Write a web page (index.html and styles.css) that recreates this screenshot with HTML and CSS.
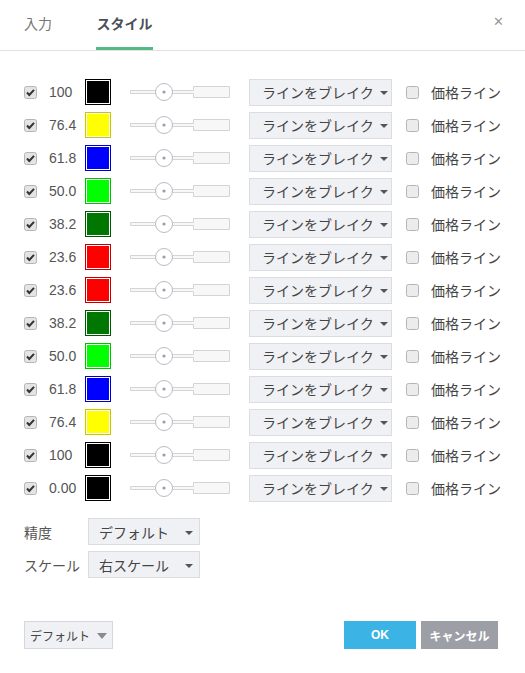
FILE: index.html
```html
<!DOCTYPE html>
<html>
  <head>
    <title>スタイル</title>
    <meta charset="UTF-8">
    <link rel="stylesheet" href="styles.css">
  </head>
  <body>
    <div class="dialog">
      <div class="header">
        <div class="tab">入力</div>
        <div class="tab active">スタイル</div>
        <div class="close">&#x2715;</div>
      </div>

      <div class="levels" id="levels"></div>

      <div class="options">
        <div class="option">
          <span class="option-label">精度</span>
          <div class="select small">デフォルト<span class="caret"></span></div>
        </div>
        <div class="option">
          <span class="option-label">スケール</span>
          <div class="select small">右スケール<span class="caret"></span></div>
        </div>
      </div>

      <div class="footer">
        <div class="btn btn-default">デフォルト<span class="caret big"></span></div>
        <div class="spacer"></div>
        <div class="btn btn-ok">OK</div>
        <div class="btn btn-cancel">キャンセル</div>
      </div>
    </div>

    <script>
      // fib levels: value, fill colour, border colour
      var levels = [
        ['100', '#000000', '#000000'],
        ['76.4', '#ffff00', '#c8c800'],
        ['61.8', '#0000ff', '#0000c0'],
        ['50.0', '#00ff00', '#00c000'],
        ['38.2', '#007700', '#005500'],
        ['23.6', '#ff0000', '#c00000'],
        ['23.6', '#ff0000', '#c00000'],
        ['38.2', '#007700', '#005500'],
        ['50.0', '#00ff00', '#00c000'],
        ['61.8', '#0000ff', '#0000c0'],
        ['76.4', '#ffff00', '#c8c800'],
        ['100', '#000000', '#000000'],
        ['0.00', '#000000', '#000000']
      ];

      var check = '<svg width="13" height="13" viewBox="0 0 13 13"><rect x="0.5" y="0.5" width="12" height="12" rx="2" fill="#e4e4e4" stroke="#b5b5b5"/><path d="M3 6.5 L5.3 9 L10 3.8" fill="none" stroke="#333" stroke-width="2"/></svg>';
      var box = '<svg width="13" height="13" viewBox="0 0 13 13"><rect x="0.5" y="0.5" width="12" height="12" rx="2" fill="#ececec" stroke="#b5b5b5"/></svg>';
      var slider = '<svg width="100" height="26" viewBox="0 0 100 26">' +
        '<path d="M0.5 11.5 H63.5 V7.5 H99.5 V18.5 H63.5 V14.5 H0.5 Z" fill="#f7f7f7" stroke="#d4d4d4"/>' +
        '<circle cx="34" cy="13" r="8.5" fill="#fff" stroke="#b9bcc4"/>' +
        '<circle cx="34" cy="13" r="1.6" fill="#9a9ea6"/></svg>';

      var html = '';
      levels.forEach(function(l) {
        html += '<div class="row">' +
          '<span class="cb">' + check + '</span>' +
          '<span class="value">' + l[0] + '</span>' +
          '<span class="swatch" style="border-color:' + l[2] + '"><span style="background:' + l[1] + '"></span></span>' +
          '<span class="slider">' + slider + '</span>' +
          '<div class="select">ラインをブレイク<span class="caret"></span></div>' +
          '<span class="cb2">' + box + '</span>' +
          '<span class="price">価格ライン</span>' +
          '</div>';
      });
      document.getElementById('levels').innerHTML = html;
    </script>
  </body>
</html>
```

FILE: styles.css
```css
body {
  margin: 0;
  padding: 0;
  background-color: #fff;
  font-family: "Liberation Sans", "Noto Sans CJK JP", sans-serif;
  color: #444;
  white-space: nowrap;
}

.dialog {
  width: 525px;
  height: 673px;
  display: flex;
  flex-direction: column;
}

.header {
  display: flex;
  align-items: flex-end;
  height: 51px;
  padding-left: 24px;
  border-bottom: 1px solid #e1e1e1;
  box-sizing: border-box;
  position: relative;
}

.tab {
  font-size: 14px;
  color: #777;
  height: 37px;
  line-height: 22px;
  margin-right: 45px;
  box-sizing: border-box;
}

.tab.active {
  color: #4a4f58;
  font-weight: bold;
  border-bottom: 3px solid #53b987;
  width: 57px;
  margin-left: -1px;
  text-align: center;
}

.close {
  position: absolute;
  right: 21px;
  top: 14px;
  font-size: 13px;
  color: #9a9a9a;
}

.levels {
  display: flex;
  flex-direction: column;
  gap: 7px;
  padding-top: 28px;
}

.row {
  display: flex;
  align-items: center;
  height: 26px;
  padding-left: 24px;
}

.cb {
  display: flex;
  width: 25px;
}

.value {
  width: 36px;
  font-size: 14px;
  color: #555;
}

.swatch {
  width: 26px;
  height: 26px;
  box-sizing: border-box;
  border: 1px solid #000;
  padding: 1px;
  background: #fff;
  margin-right: 19px;
}

.swatch span {
  display: block;
  width: 100%;
  height: 100%;
}

.slider {
  display: flex;
  width: 100px;
  margin-right: 19px;
}

.select {
  display: flex;
  align-items: center;
  width: 143px;
  height: 27px;
  box-sizing: border-box;
  padding-left: 12px;
  background: #f0f1f4;
  border: 1px solid #dcdde1;
  font-size: 14px;
  color: #444;
  margin-right: 14px;
}

.caret {
  width: 0;
  height: 0;
  border-left: 4px solid transparent;
  border-right: 4px solid transparent;
  border-top: 4px solid #555;
  margin-left: 6px;
  margin-top: 2px;
}

.cb2 {
  display: flex;
  width: 25px;
}

.price {
  font-size: 14px;
  color: #444;
}

.options {
  display: flex;
  flex-direction: column;
  gap: 6px;
  padding-top: 17px;
  padding-left: 24px;
}

.option {
  display: flex;
  align-items: center;
}

.option-label {
  width: 64px;
  font-size: 14px;
  color: #555;
}

.select.small {
  width: 112px;
  padding-left: 10px;
}

.select.small .caret {
  margin-left: auto;
  margin-right: 6px;
}

.footer {
  display: flex;
  align-items: center;
  padding: 0 27px 0 24px;
  margin-top: 43px;
}

.spacer {
  flex: 1;
}

.btn {
  display: flex;
  align-items: center;
  justify-content: center;
  height: 28px;
  box-sizing: border-box;
  font-size: 12px;
}

.btn-default {
  width: 89px;
  background: #f0f1f4;
  border: 1px solid #d6d7db;
  color: #444;
}

.caret.big {
  border-left-width: 5px;
  border-right-width: 5px;
  border-top: 6px solid #8a8a8a;
  margin-left: 7px;
}

.btn-ok {
  width: 72px;
  background: #3cb3e5;
  color: #fff;
  font-weight: bold;
  margin-right: 5px;
}

.btn-cancel {
  width: 77px;
  background: #9c9fa6;
  color: #fff;
  font-weight: bold;
}
```
